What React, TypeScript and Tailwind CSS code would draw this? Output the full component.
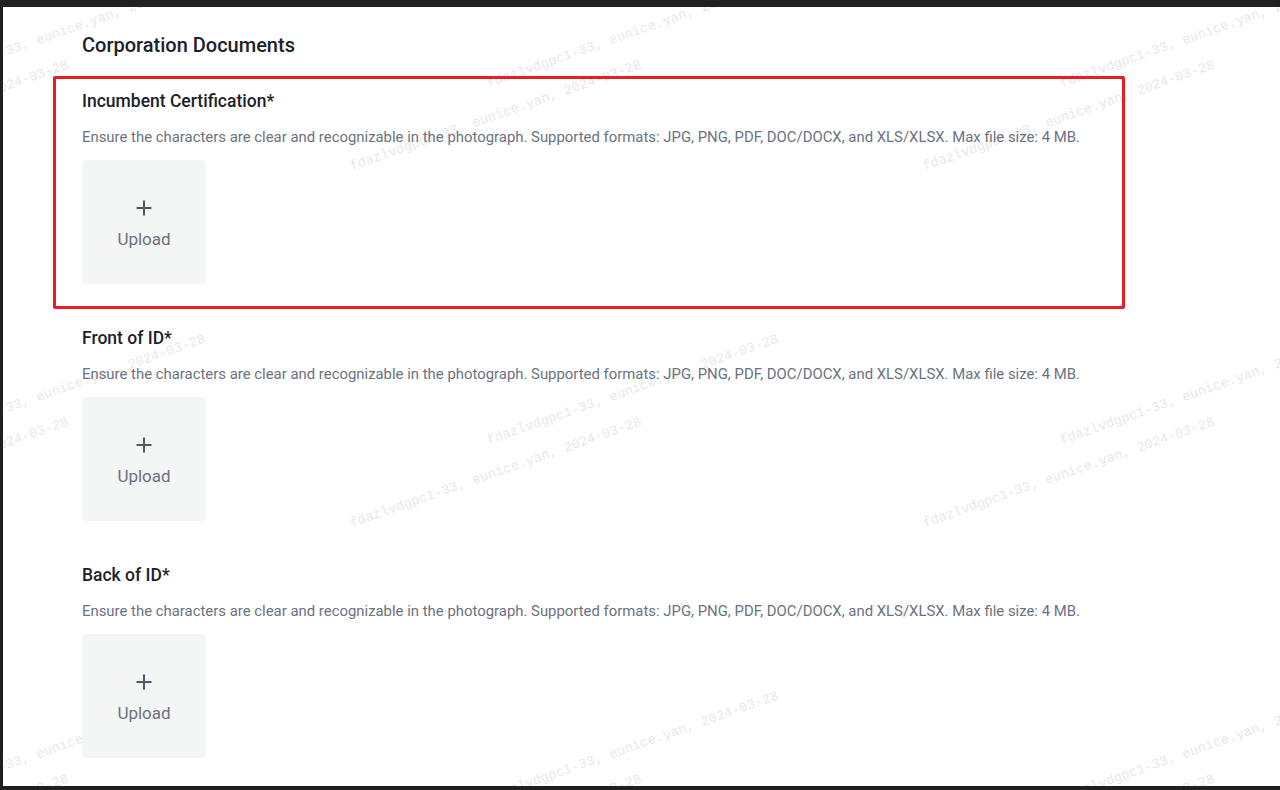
const HINT =
  "Ensure the characters are clear and recognizable in the photograph. Supported formats: JPG, PNG, PDF, DOC/DOCX, and XLS/XLSX. Max file size: 4 MB.";

const MARK = "fdazlvdgpc1-33, eunice.yan, 2024-03-28";

const fields = ["Incumbent Certification*", "Front of ID*", "Back of ID*"];

function UploadBox() {
  return (
    <button className="flex h-[124px] w-[124px] flex-col items-center justify-center rounded-[4px] bg-[#f4f5f5] pt-[5px]">
      <svg width="18" height="18" viewBox="0 0 18 18">
        <path d="M9 1.5v15M1.5 9h15" stroke="#4e5969" strokeWidth="2" />
      </svg>
      <span className="mt-[10px] text-[17px] leading-6 text-[#6b7280]">Upload</span>
    </button>
  );
}

// watermark tiles, coords relative to the white page area
function Watermarks() {
  const marks: { x: number; y: number }[] = [];
  for (let k = -1; k < 3; k++) {
    for (let m = -1; m < 3; m++) {
      marks.push({ x: 487 + 573 * k, y: 78 + 357 * m });
      marks.push({ x: 350 + 573 * k, y: 161 + 357 * m });
    }
  }
  return (
    <div className="pointer-events-none absolute inset-0 overflow-hidden">
      {marks.map((p, i) => (
        <span
          key={i}
          className="absolute origin-[0_100%] -rotate-[19.4deg] whitespace-nowrap font-['Liberation_Mono',monospace] text-[13.5px] leading-[14px] text-[#e8e8e8]"
          style={{ left: p.x, top: p.y - 8 }}
        >
          {MARK}
        </span>
      ))}
    </div>
  );
}

export default function App() {
  return (
    <div className="relative h-[790px] w-[1280px] overflow-hidden bg-[#202020] pb-[4px] pl-[3px] pt-[7px] font-['Roboto',sans-serif]">
      <div className="relative h-full bg-white pl-[79px] pt-[24px]">
        <Watermarks />
        <div className="relative">
          <h1 className="text-[20px] font-medium leading-7 text-[#1d2129]">Corporation Documents</h1>
          <div className="mt-[30px] flex flex-col gap-[42px]">
            {fields.map((f) => (
              <section key={f}>
                <h2 className="text-[17.5px] font-medium leading-6 text-[#1d2129]">{f}</h2>
                <p className="mt-[14px] text-[14.9px] leading-5 text-[#6b7280]">{HINT}</p>
                <div className="mt-[13px]">
                  <UploadBox />
                </div>
              </section>
            ))}
          </div>
        </div>
      </div>
      <div className="pointer-events-none absolute left-[53px] top-[76px] h-[233px] w-[1072px] rounded-[2px] border-[3px] border-[#ea1c24]" />
    </div>
  );
}
